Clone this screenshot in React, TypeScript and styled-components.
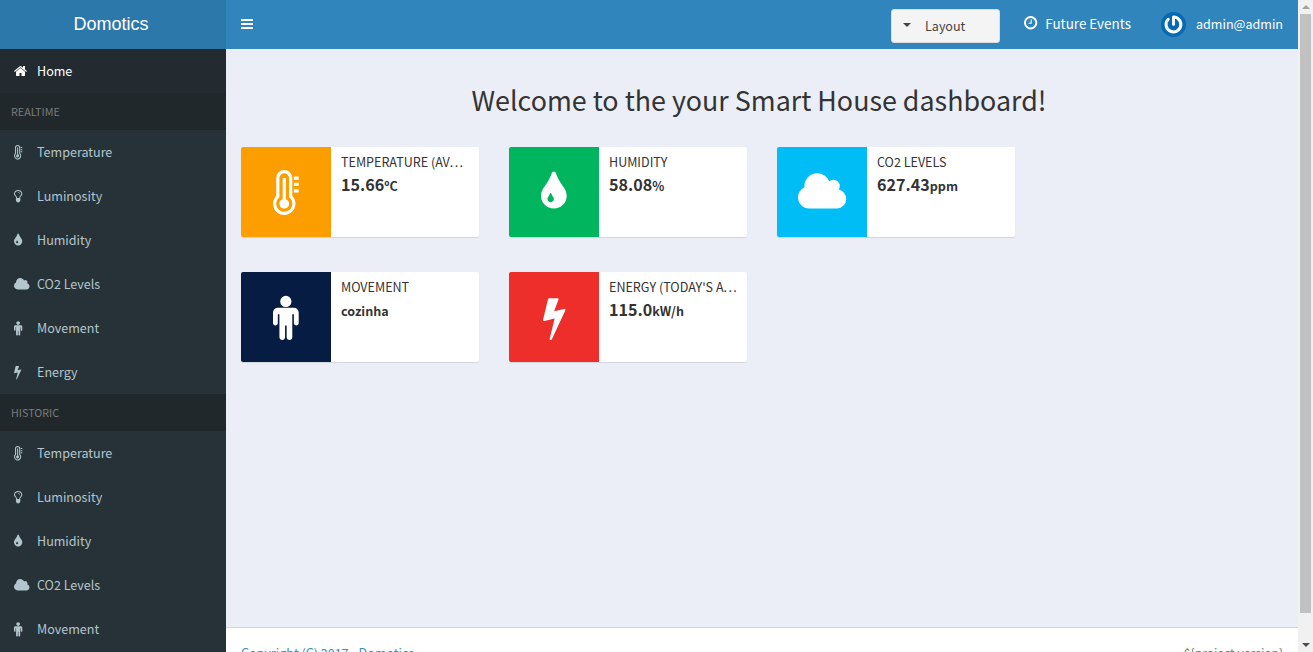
import React from "react";
import styled, { createGlobalStyle } from "styled-components";

const sans = `"Noto Sans CJK SC", "Noto Sans CJK JP", "Open Sans", sans-serif`;

const GlobalStyle = createGlobalStyle`
  * { box-sizing: border-box; }
  html, body { margin: 0; height: 100%; overflow: hidden; }
  body { font-family: ${sans}; font-size: 12.55px; color: #333; background: #fff; }
`;

type Glyph = { x: number; w: number; d: string };

const glyphs: Record<string, Glyph> = {
  home: {
    x: 64,
    w: 1664,
    d: "M1472 992v480q0 26-19 45t-45 19h-384v-384h-256v384h-384q-26 0-45-19t-19-45v-480q0-1 .5-3t.5-3l575-474 575 474q1 2 1 6zm223-69l-62 74q-8 9-21 11h-3q-13 0-21-7l-692-577-692 577q-12 8-24 7-13-2-21-11l-62-74q-8-10-7-23.5t11-21.5l719-599q32-26 76-26t76 26l244 204v-195q0-14 9-23t23-9h192q14 0 23 9t9 23v408l219 182q10 8 11 21.5t-7 23.5z",
  },
  thermometer: {
    x: 0,
    w: 1024,
    d: "M640 1344a192 192 0 1 1-256-181V320h128v843a192 192 0 0 1 128 181zM768 1344a320 320 0 0 0-128-256V320a192 192 0 0 0-384 0v768a320 320 0 1 0 512 256zM896 1344a448 448 0 1 1-768-313V320a320 320 0 0 1 640 0v711a448 448 0 0 1 128 313zM1024 768v128H832V768zM1024 512v128H832V512zM1024 256v128H832V256z",
  },
  bulb: {
    x: 384,
    w: 1024,
    d: "M1120 576q0 13-9.5 22.5t-22.5 9.5-22.5-9.5-9.5-22.5q0-46-54-71t-106-25q-13 0-22.5-9.5t-9.5-22.5 9.5-22.5 22.5-9.5q50 0 99.5 16t87 54 37.5 90zm160 0q0-72-34.5-134t-90-101.5-123-62-136.5-22.5-136.5 22.5-123 62-90 101.5-34.5 134q0 101 68 180 10 11 30.5 33t30.5 33q128 153 141 298h228q13-145 141-298 10-11 30.5-33t30.5-33q68-79 68-180zm128 0q0 155-103 268-45 49-74.5 87t-59.5 95.5-34 107.5q47 28 47 82 0 37-25 64 25 27 25 64 0 52-45 81 13 23 13 47 0 46-31.5 71t-77.5 25q-20 44-60 70t-87 26-87-26-60-70q-46 0-77.5-25t-31.5-71q0-24 13-47-45-29-45-81 0-37 25-64-25-27-25-64 0-54 47-82-4-50-34-107.5t-59.5-95.5-74.5-87q-103-113-103-268 0-99 44.5-184.5t117-142 164-89 186.5-32.5 186.5 32.5 164 89 117 142 44.5 184.5z",
  },
  drop: {
    x: 384,
    w: 1024,
    d: "M896 1152q0-36-20-69-1-1-15.5-22.5t-25.5-38-25-44-21-50.5q-4-16-21-16t-21 16q-7 23-21 50.5t-25 44-25.5 38-15.5 22.5q-20 33-20 69 0 53 37.5 90.5t90.5 37.5 90.5-37.5 37.5-90.5zm512-128q0 212-150 362t-362 150-362-150-150-362q0-145 81-275 6-9 62.5-90.5t101-151 99.5-178 83-201.5q9-30 34-47t51-17 51.5 17 33.5 47q28 93 83 201.5t99.5 178 101 151 62.5 90.5q81 127 81 275z",
  },
  cloud: {
    x: 64,
    w: 1920,
    d: "M1984 1152q0 159-112.5 271.5t-271.5 112.5h-1088q-185 0-316.5-131.5t-131.5-316.5q0-132 71-241.5t187-163.5q-2-28-2-43 0-212 150-362t362-150q158 0 286.5 88t187.5 230q70-62 166-62 106 0 181 75t75 181q0 75-41 138 129 30 213 134.5t84 239.5z",
  },
  person: {
    x: 384,
    w: 1024,
    d: "M1408 704v416q0 40-28 68t-68 28-68-28-28-68v-352h-64v912q0 46-33 79t-79 33-79-33-33-79v-464h-64v464q0 46-33 79t-79 33-79-33-33-79v-912h-64v352q0 40-28 68t-68 28-68-28-28-68v-416q0-80 56-136t136-56h640q80 0 136 56t56 136zm-288-448q0 93-65.5 158.5t-158.5 65.5-158.5-65.5-65.5-158.5 65.5-158.5 158.5-65.5 158.5 65.5 65.5 158.5z",
  },
  bolt: {
    x: 448,
    w: 896,
    d: "M1333 566q18 20 7 44l-540 1157q-13 25-42 25-4 0-14-2-17-5-25.5-19t-4.5-30l197-808-406 101q-4 1-12 1-18 0-31-11-18-15-13-39l201-825q4-14 16-23t28-9h328q19 0 32 12.5t13 29.5q0 8-5 18l-171 463 396-98q8-2 12-2 19 0 34 15z",
  },
  clock: {
    x: 128,
    w: 1536,
    d: "M1024 544v448q0 14-9 23t-23 9h-320q-14 0-23-9t-9-23v-64q0-14 9-23t23-9h224v-352q0-14 9-23t23-9h64q14 0 23 9t9 23zm416 352q0-148-73-273t-198-198-273-73-273 73-198 198-73 273 73 273 198 198 273 73 273-73 198-198 73-273zm224 0q0 209-103 385.5t-279.5 279.5-385.5 103-385.5-103-279.5-279.5-103-385.5 103-385.5 279.5-279.5 385.5-103 385.5 103 279.5 279.5 103 385.5z",
  },
};

const GlyphSvg = styled.svg`
  display: block;
  flex: none;
  overflow: visible;
  fill: currentColor;
`;

function Icon({ name, size }: { name: string; size: number }) {
  const g = glyphs[name];
  return (
    <GlyphSvg
      width={(size * g.w) / 1792}
      height={size}
      viewBox={`${g.x} 0 ${g.w} 1792`}
      aria-hidden
    >
      <path fillRule="evenodd" d={g.d} />
    </GlyphSvg>
  );
}

const Screen = styled.div`
  display: flex;
  width: 100%;
  height: 652px;
  overflow: hidden;
`;

const Sidebar = styled.aside`
  flex: none;
  width: 226px;
  background: #273238;
`;

const Brand = styled.div`
  height: 49px;
  padding-right: 4px;
  background: #2d78ab;
  color: #fff;
  font: 18px/48px "Liberation Sans", Arial, sans-serif;
  text-align: center;
`;

const SectionTitle = styled.div`
  height: 37px;
  padding-left: 11px;
  background: #20282b;
  color: #7b7b7b;
  font-size: 10.75px;
  line-height: 37px;
`;

const MenuItem = styled.a<{ $active?: boolean }>`
  display: flex;
  align-items: center;
  height: 44px;
  padding-left: 14px;
  background: ${(p) => (p.$active ? "#232b30" : "transparent")};
  color: ${(p) => (p.$active ? "#fff" : "#b4c6cd")};
  line-height: 44px;
`;

const MenuIcon = styled.span`
  width: 23px;
`;

const Main = styled.div`
  display: flex;
  flex: 1;
  flex-direction: column;
  min-width: 0;
  background: #ebeef6;
`;

const Navbar = styled.header`
  display: flex;
  flex: none;
  align-items: center;
  height: 49px;
  padding: 0 15px;
  background: #3085bd;
  color: #fff;
`;

const Burger = styled.button`
  display: flex;
  flex-direction: column;
  gap: 2px;
  width: 12px;
  margin: 0 auto 1px 0;
  padding: 0;
  border: 0;
  background: none;
`;

const BurgerLine = styled.span`
  height: 2px;
  background: #fff;
`;

const LayoutButton = styled.button`
  display: flex;
  align-items: center;
  gap: 14px;
  width: 109px;
  height: 34px;
  margin: 3px 24px 0 0;
  padding: 0 0 0 11px;
  border: 1px solid #ddd;
  border-radius: 3px;
  background: #f4f4f4;
  color: #444;
  font: 12.55px/32px ${sans};
`;

const Caret = styled.span`
  margin-bottom: 2px;
  border: 4px solid transparent;
  border-top-color: #444;
  border-bottom: 0;
`;

const NavLink = styled.a`
  display: flex;
  align-items: center;
  gap: 8px;
  width: 107px;
  margin-right: 30px;
  font-size: 13.45px;
  line-height: 46px;
  height: 49px;
  padding-bottom: 3px;
  white-space: nowrap;
`;

const User = styled.a`
  display: flex;
  align-items: center;
  gap: 10px;
  font-size: 12.55px;
`;

const UserName = styled.span`
  padding-bottom: 2px;
  line-height: 47px;
`;

const Content = styled.main`
  flex: 1;
  padding: 34px 15px 0;
`;

const Heading = styled.h1`
  margin: 0 6px 31px 0;
  font-size: 26.85px;
  font-weight: 400;
  line-height: 33px;
  text-align: center;
`;

const Cards = styled.section`
  display: grid;
  grid-template-columns: repeat(3, 238px);
  gap: 35px 30px;
`;

const Card = styled.article`
  display: flex;
  height: 90px;
  overflow: hidden;
  border-radius: 2px;
  background: #fff;
  box-shadow: 0 1px 1px rgba(0, 0, 0, 0.1);
`;

const CardIcon = styled.div<{ $color: string }>`
  display: flex;
  flex: none;
  align-items: center;
  justify-content: center;
  width: 90px;
  background: ${(p) => p.$color};
  color: #fff;
`;

const CardBody = styled.div`
  min-width: 0;
  padding: 5px 10px;
`;

const CardTitle = styled.div`
  height: 20px;
  line-height: 20px;
  white-space: nowrap;
`;

const Dots = styled.span`
  letter-spacing: 1.4px;
`;

const CardValue = styled.div`
  height: 24px;
  font-size: 16.13px;
  font-weight: 700;
  line-height: 24px;
`;

const Unit = styled.span`
  font-size: 12.55px;
`;

const Footer = styled.footer`
  display: flex;
  flex: none;
  justify-content: space-between;
  height: 25px;
  padding: 15px 15px 0;
  overflow: hidden;
  border-top: 1px solid #d2d6de;
  background: #fff;
  color: #777;
  line-height: 20px;
`;

const FooterLink = styled.a`
  color: #3c8dbc;
`;

const Version = styled.span`
  font-size: 12.1px;
`;

const Scrollbar = styled.div`
  display: flex;
  flex: none;
  flex-direction: column;
  align-items: center;
  justify-content: space-between;
  width: 15px;
  background: #f1f1f1;
`;

const ScrollThumb = styled.div`
  width: 11px;
  height: 599px;
  margin: 0 0 auto;
  background: #c1c1c1;
`;

const ScrollArrow = styled.div<{ $up?: boolean }>`
  display: flex;
  align-items: center;
  justify-content: center;
  height: 14px;
  &::after {
    content: "";
    border: 4px solid transparent;
    ${(p) =>
      p.$up
        ? "border-bottom-color: #a3a3a3; border-top: 0;"
        : "border-top-color: #505050; border-bottom: 0;"}
  }
`;

const realtime = [
  ["thermometer", "Temperature"],
  ["bulb", "Luminosity"],
  ["drop", "Humidity"],
  ["cloud", "CO2 Levels"],
  ["person", "Movement"],
  ["bolt", "Energy"],
];

const historic = realtime.slice(0, 5);

const cards = [
  { icon: "thermometer", color: "#fc9d00", title: "TEMPERATURE (AV", cut: true, value: "15.66", unit: "ºC" },
  { icon: "drop", color: "#00b55d", title: "HUMIDITY", value: "58.08", unit: "%" },
  { icon: "cloud", color: "#00bdf5", title: "CO2 LEVELS", value: "627.43", unit: "ppm" },
  { icon: "person", color: "#061c42", title: "MOVEMENT", value: "", unit: "cozinha" },
  { icon: "bolt", color: "#ed2e2a", title: "ENERGY (TODAY'S A", cut: true, value: "115.0", unit: "kW/h" },
];

function MenuList({ items }: { items: string[][] }) {
  return (
    <>
      {items.map(([icon, label]) => (
        <MenuItem key={label}>
          <MenuIcon>
            <Icon name={icon} size={14.5} />
          </MenuIcon>
          {label}
        </MenuItem>
      ))}
    </>
  );
}

function Avatar() {
  return (
    <svg width="25" height="25" viewBox="0 0 25 25" aria-hidden>
      <circle cx="12.5" cy="12.5" r="12.5" fill="#0769b4" />
      <path
        d="M12.5 12.2V5.1A7.4 7.4 0 1 1 7.2 7.3"
        fill="none"
        stroke="#fff"
        strokeWidth="3"
        strokeLinecap="round"
        strokeLinejoin="round"
      />
    </svg>
  );
}

export default function App() {
  return (
    <Screen>
      <GlobalStyle />
      <Sidebar>
        <Brand>Domotics</Brand>
        <MenuItem $active>
          <MenuIcon>
            <Icon name="home" size={14} />
          </MenuIcon>
          Home
        </MenuItem>
        <SectionTitle>REALTIME</SectionTitle>
        <MenuList items={realtime} />
        <SectionTitle>HISTORIC</SectionTitle>
        <MenuList items={historic} />
      </Sidebar>
      <Main>
        <Navbar>
          <Burger aria-label="Toggle navigation">
            <BurgerLine />
            <BurgerLine />
            <BurgerLine />
          </Burger>
          <LayoutButton>
            <Caret />
            Layout
          </LayoutButton>
          <NavLink>
            <Icon name="clock" size={15.5} />
            Future Events
          </NavLink>
          <User>
            <Avatar />
            <UserName>admin@admin</UserName>
          </User>
        </Navbar>
        <Content>
          <Heading>Welcome to the your Smart House dashboard!</Heading>
          <Cards>
            {cards.map((c) => (
              <Card key={c.title}>
                <CardIcon $color={c.color}>
                  <Icon name={c.icon} size={45} />
                </CardIcon>
                <CardBody>
                  <CardTitle>
                    {c.title}
                    {c.cut && <Dots>...</Dots>}
                  </CardTitle>
                  <CardValue>
                    {c.value}
                    <Unit>{c.unit}</Unit>
                  </CardValue>
                </CardBody>
              </Card>
            ))}
          </Cards>
        </Content>
        <Footer>
          <FooterLink>Copyright (C) 2017 - Domotics</FooterLink>
          <Version>{"${project.version}"}</Version>
        </Footer>
      </Main>
      <Scrollbar>
        <ScrollArrow $up />
        <ScrollThumb />
        <ScrollArrow />
      </Scrollbar>
    </Screen>
  );
}
